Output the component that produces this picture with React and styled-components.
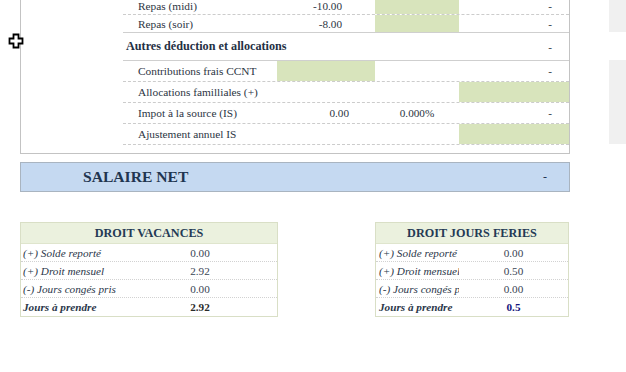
import React from "react";
import styled, { createGlobalStyle } from "styled-components";

const GlobalStyle = createGlobalStyle`
  html, body { margin: 0; padding: 0; background: #ffffff; overflow: hidden; }
  body { font-family: "Liberation Serif", "Times New Roman", serif; color: #2c3544; }
  * { box-sizing: border-box; }
`;

const Page = styled.div`
  position: relative;
  width: 626px;
  height: 372px;
  overflow: hidden;
`;

const Sheet = styled.div`
  margin-top: -4px;
  padding-left: 20px;
  display: flex;
  flex-direction: column;
`;

const TopArea = styled.div`
  display: flex;
  align-items: flex-start;
`;

const MainPanel = styled.div`
  width: 550px;
  border: 1px solid #c3c3c3;
  padding-bottom: 8px;
  display: flex;
  flex-direction: column;
`;

const Row = styled.div`
  display: grid;
  grid-template-columns: 102px 1fr;
  height: ${(p) => p.$h}px;
`;

const Lines = styled.div`
  display: grid;
  grid-template-columns: 154px 98px 84px 110px;
  border-bottom: 1px ${(p) => (p.$solid ? "solid #cfcfcf" : "dashed #cccccc")};
`;

const Label = styled.div`
  font-size: 11.35px;
  padding-left: 15px;
  display: flex;
  align-items: center;
  white-space: nowrap;
`;

const Section = styled.div`
  grid-column: 1 / 4;
  font-size: 12.2px;
  font-weight: bold;
  color: #243044;
  padding-left: 3px;
  display: flex;
  align-items: center;
  white-space: nowrap;
`;

const Num = styled.div`
  font-size: 11.2px;
  display: flex;
  align-items: center;
  justify-content: ${(p) => (p.$center ? "center" : "flex-end")};
  padding-right: ${(p) => p.$pr || 0}px;
  background: ${(p) => (p.$green ? "#d8e4bc" : "transparent")};
`;

const SidePanels = styled.div`
  margin-left: 39px;
  display: flex;
  flex-direction: column;
  gap: 28px;
`;

const SideBlock = styled.div`
  width: 40px;
  height: ${(p) => p.$h}px;
  background: #f0f0f0;
`;

const NetBar = styled.div`
  margin-top: 8px;
  width: 550px;
  height: 30px;
  background: #c5d9f1;
  border: 1px solid #a9b4c0;
  display: flex;
  align-items: center;
  justify-content: space-between;
  padding: 0 22px 0 62px;
  color: #1f3550;
`;

const NetTitle = styled.span`
  font-size: 15.6px;
  font-weight: bold;
`;

const NetValue = styled.span`
  font-size: 12px;
`;

const BoxesRow = styled.div`
  margin-top: 30px;
  display: flex;
  gap: 97px;
`;

const Box = styled.div`
  width: ${(p) => p.$w}px;
  border: 1px solid #d9dfc6;
  display: flex;
  flex-direction: column;
`;

const BoxHeader = styled.div`
  height: 21px;
  background: #ebf1de;
  border-bottom: 1px solid #dfe5cd;
  display: flex;
  align-items: center;
  justify-content: center;
  font-size: 12.2px;
  font-weight: bold;
  color: #243a55;
`;

const BoxRow = styled.div`
  display: grid;
  grid-template-columns: ${(p) => p.$label}px 1fr;
  height: ${(p) => p.$h || 18}px;
  border-bottom: ${(p) => (p.$last ? "none" : "1px dotted #d2d2d2")};
`;

const BoxLabel = styled.div`
  font-size: 11.2px;
  font-style: italic;
  font-weight: ${(p) => (p.$bold ? "bold" : "normal")};
  color: #2b374a;
  padding-left: ${(p) => p.$pl}px;
  display: flex;
  align-items: center;
  white-space: nowrap;
  overflow: hidden;
`;

const BoxValue = styled.div`
  font-size: 11.2px;
  font-weight: ${(p) => (p.$bold ? "bold" : "normal")};
  color: ${(p) => p.$color || "#3a4555"};
  display: flex;
  align-items: center;
  justify-content: center;
`;

const Cursor = styled.svg`
  position: absolute;
  left: 8px;
  top: 33px;
`;

function Droit({ title, width, labelW, pl, rows, total, totalColor }) {
  return (
    <Box $w={width}>
      <BoxHeader>{title}</BoxHeader>
      {rows.map(([l, v]) => (
        <BoxRow key={l} $label={labelW}>
          <BoxLabel $pl={pl}>{l}</BoxLabel>
          <BoxValue>{v}</BoxValue>
        </BoxRow>
      ))}
      <BoxRow $label={labelW} $h={18} $last>
        <BoxLabel $pl={pl} $bold>Jours à prendre</BoxLabel>
        <BoxValue $bold $color={totalColor}>{total}</BoxValue>
      </BoxRow>
    </Box>
  );
}

export default function App() {
  return (
    <>
      <GlobalStyle />
      <Page>
        <Sheet>
          <TopArea>
            <MainPanel>
              <Row $h={18}>
                <div />
                <Lines>
                  <Label>Repas (midi)</Label>
                  <Num $pr={33}>-10.00</Num>
                  <Num $green />
                  <Num $pr={17}>-</Num>
                </Lines>
              </Row>
              <Row $h={18}>
                <div />
                <Lines $solid>
                  <Label>Repas (soir)</Label>
                  <Num $pr={33}>-8.00</Num>
                  <Num $green />
                  <Num $pr={17}>-</Num>
                </Lines>
              </Row>
              <Row $h={28}>
                <div />
                <Lines $solid>
                  <Section>Autres déduction et allocations</Section>
                  <Num $pr={17}>-</Num>
                </Lines>
              </Row>
              <Row $h={21}>
                <div />
                <Lines>
                  <Label>Contributions frais CCNT</Label>
                  <Num $green />
                  <Num />
                  <Num $pr={17}>-</Num>
                </Lines>
              </Row>
              <Row $h={21}>
                <div />
                <Lines>
                  <Label>Allocations familliales (+)</Label>
                  <Num />
                  <Num />
                  <Num $green />
                </Lines>
              </Row>
              <Row $h={21}>
                <div />
                <Lines>
                  <Label>Impot à la source (IS)</Label>
                  <Num $pr={26}>0.00</Num>
                  <Num $center>0.000%</Num>
                  <Num $pr={17}>-</Num>
                </Lines>
              </Row>
              <Row $h={21}>
                <div />
                <Lines>
                  <Label>Ajustement annuel IS</Label>
                  <Num />
                  <Num />
                  <Num $green />
                </Lines>
              </Row>
            </MainPanel>
            <SidePanels>
              <SideBlock $h={36} />
              <SideBlock $h={84} />
            </SidePanels>
          </TopArea>

          <NetBar>
            <NetTitle>SALAIRE NET</NetTitle>
            <NetValue>-</NetValue>
          </NetBar>

          <BoxesRow>
            <Droit
              title="DROIT VACANCES"
              width={258}
              labelW={102}
              pl={2}
              rows={[
                ["(+) Solde reporté", "0.00"],
                ["(+) Droit mensuel", "2.92"],
                ["(-) Jours congés pris", "0.00"],
              ]}
              total="2.92"
              totalColor="#2b2b2b"
            />
            <Droit
              title="DROIT JOURS FERIES"
              width={194}
              labelW={83}
              pl={3}
              rows={[
                ["(+) Solde reporté", "0.00"],
                ["(+) Droit mensuel", "0.50"],
                ["(-) Jours congés pris", "0.00"],
              ]}
              total="0.5"
              totalColor="#14147a"
            />
          </BoxesRow>
        </Sheet>
        <Cursor width="17" height="17" viewBox="0 0 17 17">
          <path
            d="M5.5 1.5 H10.5 V5.5 H14.5 V10.5 H10.5 V14.5 H5.5 V10.5 H1.5 V5.5 H5.5 Z"
            fill="#ffffff"
            stroke="#000000"
            strokeWidth="1.8"
            strokeLinejoin="miter"
          />
        </Cursor>
      </Page>
    </>
  );
}
